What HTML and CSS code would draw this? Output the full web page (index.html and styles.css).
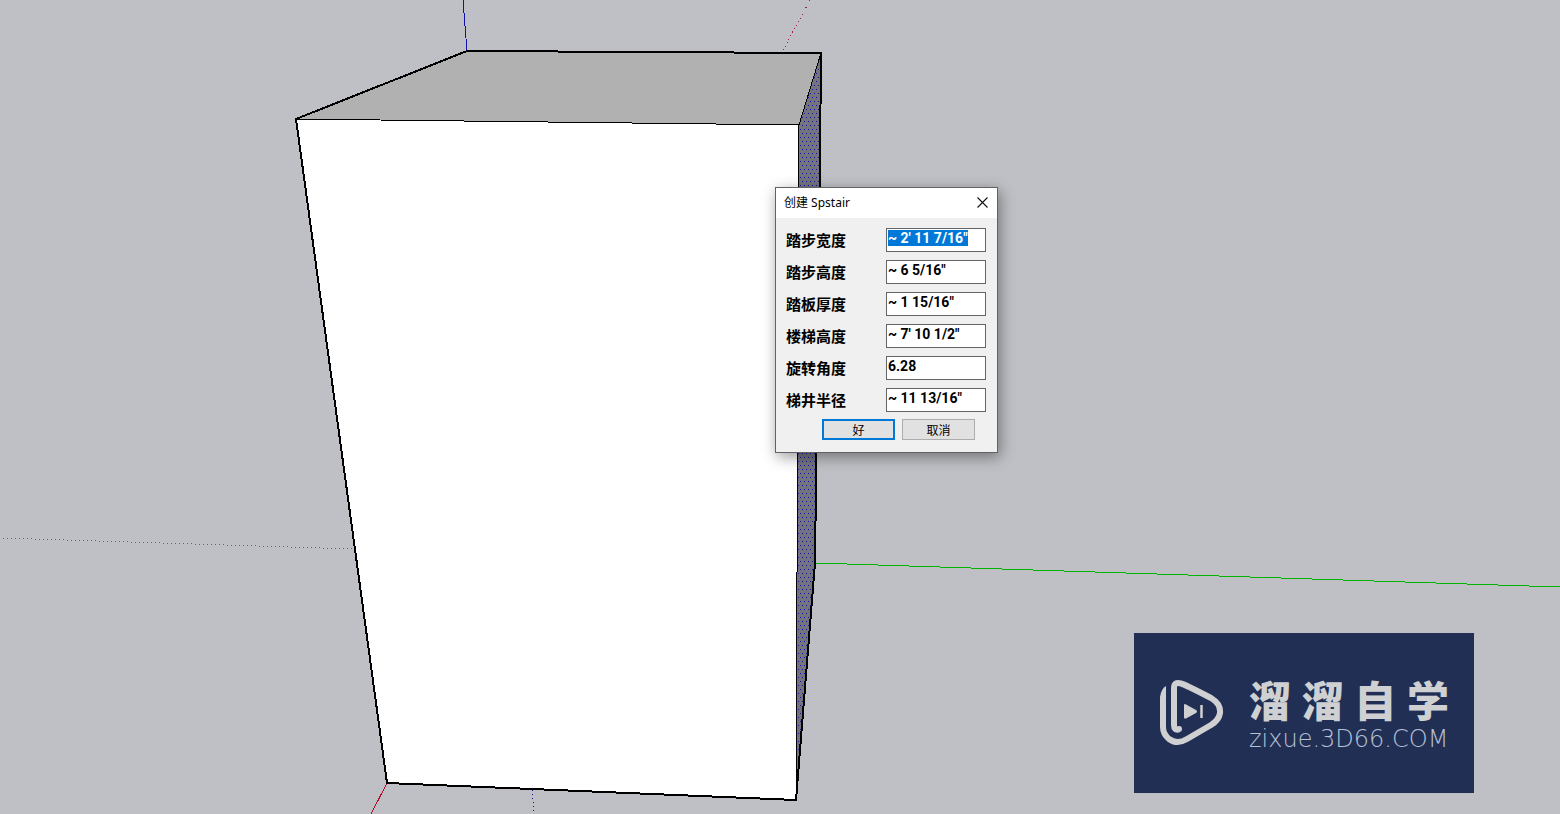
FILE: index.html
```html
<!DOCTYPE html>
<html lang="zh-CN">
<head>
<meta charset="utf-8">
<meta name="viewport" content="width=device-width, initial-scale=1">
<title>创建 Spstair</title>
<link rel="stylesheet" href="styles.css">
</head>
<body>
<main class="viewport">
  <svg class="scene" viewBox="0 0 1560 814" preserveAspectRatio="xMinYMin slice" aria-hidden="true">
    <defs>
      <pattern id="dots" width="4" height="8" patternUnits="userSpaceOnUse">
        <rect width="4" height="8" fill="#74747e"/>
        <rect x="0" y="1" width="1" height="1" fill="#1010b0"/>
        <rect x="2" y="5" width="1" height="1" fill="#1010b0"/>
      </pattern>
    </defs>
    <g fill="none" shape-rendering="crispEdges">
      <path d="M463 0L467 51" stroke="#1010b0"/>
      <path d="M810 0L782 52" stroke="#a02040" stroke-dasharray="1 3"/>
      <path d="M3 538L354 549" stroke="#00a040" stroke-dasharray="1 3"/>
      <path d="M816 563L1560 587" stroke="#00b400"/>
      <path d="M387 783L371 814" stroke="#b01020"/>
      <path d="M532 790L534 814" stroke="#1010a0" stroke-dasharray="1 3"/>
    </g>
    <path d="M296 119L467 51L821 53L799 125Z" fill="#b1b1b1"/>
    <path d="M296 119L799 125L796 800L387 783Z" fill="#fff"/>
    <path d="M821 53L799 125L796 800L815 563Z" fill="url(#dots)"/>
    <g fill="none" stroke="#000" shape-rendering="crispEdges">
      <path d="M296 119L799 125L821 53M799 125L796 800"/>
      <path d="M296 119L467 51L821 53L820 160L815 563L796 800L387 783Z" stroke-width="2"/>
    </g>
  </svg>

  <form class="dialog" role="dialog" aria-labelledby="dialog-title">
    <header class="titlebar">
      <h1 class="title" id="dialog-title">创建 Spstair</h1>
      <button class="close" type="button" aria-label="关闭">
        <svg width="11" height="11" viewBox="0 0 11 11"><path d="M.5 .5L10.5 10.5M10.5 .5L.5 10.5" fill="none" stroke="#111" stroke-width="1.1"/></svg>
      </button>
    </header>
    <div class="fields">
      <label for="tread-width">踏步宽度</label><input id="tread-width" type="text" value="~ 2' 11 7/16&quot;" autofocus>
      <label for="step-height">踏步高度</label><input id="step-height" type="text" value="~ 6 5/16&quot;">
      <label for="board">踏板厚度</label><input id="board" type="text" value="~ 1 15/16&quot;">
      <label for="stair-height">楼梯高度</label><input id="stair-height" type="text" value="~ 7' 10 1/2&quot;">
      <label for="angle">旋转角度</label><input id="angle" type="text" value="6.28">
      <label for="radius">梯井半径</label><input id="radius" type="text" value="~ 11 13/16&quot;">
    </div>
    <div class="actions">
      <button class="button primary" type="button">好</button>
      <button class="button" type="button">取消</button>
    </div>
  </form>

  <aside class="brand">
    <svg class="brand-mark" width="66" height="68" viewBox="0 0 66 68" aria-hidden="true">
      <g fill="none" stroke="#cfd0d2" stroke-width="6" stroke-linejoin="round">
        <path d="M20 50.500Q15 52 15 46V9Q15 2.500 22 4.500Q26 5.500 52 19Q62 25 61 34Q60 41 52 46L28 60Q18 66 10 60Q4 55 4 48V18"/>
        <circle cx="20" cy="50" r="1.500" stroke-width="3"/>
      </g>
      <path d="M1 18Q2 10 7 7V20H1Z" fill="#cfd0d2"/>
      <path d="M25 26Q25 24.500 27 25.500L37 31Q39 32.500 37 34L27 39.500Q25 40 25 38.500Z" fill="#cfd0d2"/>
      <path d="M42.500 26V39" stroke="#cfd0d2" stroke-width="2.500"/>
    </svg>
    <div class="brand-text">
      <div class="brand-name"><span>溜</span><span>溜</span><span>自</span><span>学</span></div>
      <div class="brand-url">zixue.3D66.COM</div>
    </div>
  </aside>
</main>
<script src="main.js"></script>
</body>
</html>
```
FILE: styles.css
```css
* {
  box-sizing: border-box;
}

body {
  margin: 0;
  font-family: "Noto Sans", "Noto Sans CJK SC", sans-serif;
  font-size: 12px;
  color: #000;
}

.viewport {
  position: relative;
  min-height: 100vh;
  overflow: hidden;
  background: #bfc0c5;
}

.scene {
  position: absolute;
  inset: 0;
  width: 100%;
  height: 100%;
}

.dialog {
  position: absolute;
  left: 775px;
  top: 187px;
  width: 223px;
  padding-bottom: 12px;
  border: 1px solid #626266;
  background: #f0f0f0;
  box-shadow: 2px 4px 14px rgba(0, 0, 0, 0.4);
}

.titlebar {
  display: flex;
  align-items: center;
  justify-content: space-between;
  height: 30px;
  padding: 0 9px 2px 8px;
  background: #fff;
}

.title {
  margin: 0;
  font-size: 12px;
  font-weight: 400;
}

.close {
  display: flex;
  padding: 0;
  border: 0;
  background: none;
}

.fields {
  display: grid;
  grid-template-columns: 1fr 100px;
  align-items: center;
  row-gap: 8px;
  padding: 10px 11px 0 10px;
}

.fields label {
  font: 700 15px/24px "Noto Sans CJK SC", sans-serif;
}

.fields input {
  width: 100%;
  height: 24px;
  padding: 0 1px 4px;
  border: 1px solid #646464;
  border-radius: 0;
  outline: 0;
  background: #fff;
  color: #000;
  font: 700 14px/18px Roboto, sans-serif;
}

.fields input::selection {
  background: #0078d7;
  color: #fff;
}

.actions {
  display: flex;
  justify-content: flex-end;
  gap: 7px;
  padding: 7px 22px 0 0;
}

.button {
  width: 73px;
  height: 21px;
  padding: 0;
  border: 1px solid #adadad;
  background: #e1e1e1;
  color: #000;
  font: 12px/18px "Noto Sans CJK SC", sans-serif;
}

.button.primary {
  border: 2px solid #0078d7;
}

.brand {
  position: absolute;
  right: 86px;
  bottom: 21px;
  display: flex;
  align-items: center;
  gap: 24px;
  width: 340px;
  height: 160px;
  padding: 0 25px;
  background: #222f55;
  color: #cfd0d2;
}

.brand-mark {
  flex: none;
}

.brand-text {
  flex: 1;
  padding-bottom: 8px;
}

.brand-name {
  display: flex;
  justify-content: space-between;
  font: 900 42px/60px "Noto Sans CJK SC", sans-serif;
}

.brand-url {
  color: #b6c1d6;
  font: 200 24px/20px "DejaVu Sans", sans-serif;
}
```
FILE: main.js
```js
const firstField = document.getElementById("tread-width");
firstField.focus();
firstField.select();
```
